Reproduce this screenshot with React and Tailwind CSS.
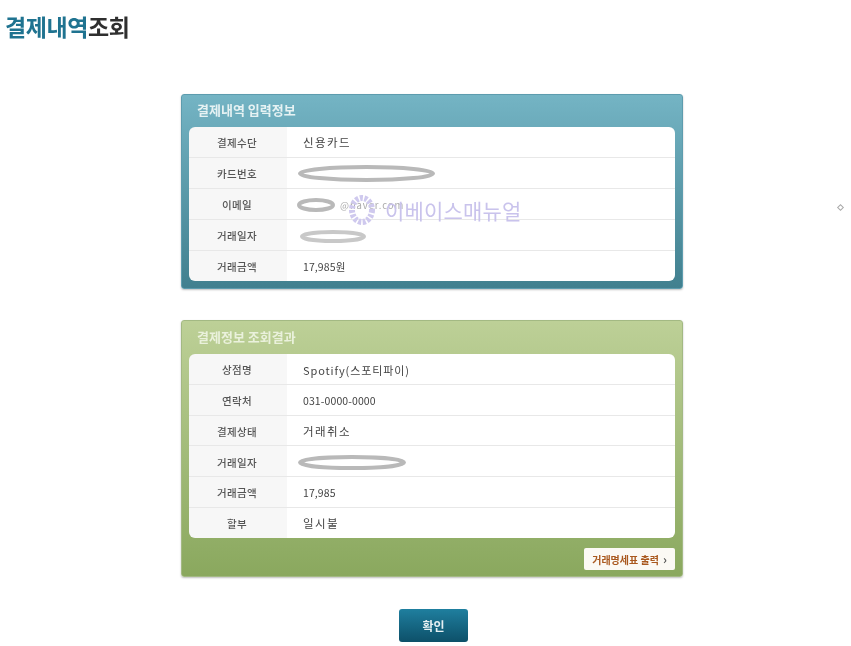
const font = "font-['Noto_Sans_CJK_KR','Noto_Sans',sans-serif]";

function Scribble({ width, height = 16, stroke = "#b9b9b9", sw = 4 }) {
  return (
    <svg width={width} height={height} viewBox={`0 0 ${width} ${height}`} className="block blur-[0.5px]">
      <ellipse cx={width / 2} cy={height / 2} rx={width / 2 - sw / 2} ry={height / 2 - sw / 2} fill="none" stroke={stroke} strokeWidth={sw} />
    </svg>
  );
}

function Row({ label, children, last }) {
  return (
    <div className={`flex flex-1 ${last ? "" : "border-b border-[#e8e8e8]"}`}>
      <div className="w-[98px] bg-[#f7f7f7] flex items-center justify-center pt-[2px] pr-[2px] text-[10.5px] tracking-[0.3px] font-medium text-[#555]">{label}</div>
      <div className="flex-1 bg-white flex items-center pl-[16px] pt-[2px] text-[#444]">{children}</div>
    </div>
  );
}

function Panel({ title, gradient, border, titleColor, headerH, innerH, footer, rows }) {
  return (
    <div className={`rounded-[3px] border ${border} ${gradient} px-[7px] shadow-[0_1px_2px_rgba(0,0,0,0.25)]`}>
      <div className={`${headerH} flex items-center pl-[8px] pb-[2px] text-[13px] font-bold ${titleColor}`}>{title}</div>
      <div className={`${innerH} rounded-[6px] overflow-hidden flex flex-col`}>
        {rows.map((r, i) => (
          <Row key={i} label={r.label} last={i === rows.length - 1}>{r.value}</Row>
        ))}
      </div>
      {footer}
    </div>
  );
}

const ko = (text) => <span className="text-[11.5px] tracking-[1.4px]">{text}</span>;
const num = (text) => <span className="text-[10.5px] tracking-[0.1px]">{text}</span>;

export default function App() {
  return (
    <div className={`relative w-[851px] h-[646px] overflow-hidden bg-white ${font} blur-[0.4px]`}>
      <h1 className="pl-[5px] pt-[9px] text-[23px] leading-[34px] font-bold tracking-[-0.4px]">
        <span className="text-[#1f7390]">결제내역</span>
        <span className="text-[#2f2f2f]">조회</span>
      </h1>

      <div className="w-[502px] ml-[181px] mt-[51px]">
        <Panel
          title="결제내역 입력정보"
          gradient="bg-gradient-to-b from-[#74b4c4] to-[#41808f]"
          border="border-[#5d9cae]"
          titleColor="text-[#e6f2f3]"
          headerH="h-[32px]"
          innerH="h-[154px]"
          rows={[
            { label: "결제수단", value: ko("신용카드") },
            { label: "카드번호", value: <span className="-ml-[5px] -mt-[2px]"><Scribble width={137} height={17} /></span> },
            {
              label: "이메일",
              value: (
                <span className="flex items-center -ml-[6px]">
                  <Scribble width={38} height={14} />
                  <span className="ml-[5px] text-[9.5px] tracking-[0.9px] text-[#aaa]">@naver.com</span>
                </span>
              ),
            },
            { label: "거래일자", value: <span className="-ml-[3px]"><Scribble width={66} height={13} stroke="#c8c8c8" /></span> },
            { label: "거래금액", value: num("17,985원") },
          ]}
          footer={<div className="h-[7px]" />}
        />

        <div className="mt-[31px]">
          <Panel
            title="결제정보 조회결과"
            gradient="bg-gradient-to-b from-[#bdd097] to-[#8aa85e]"
            border="border-[#a3b983]"
            titleColor="text-[#eaf1dc]"
            headerH="h-[33px]"
            innerH="h-[184px]"
            rows={[
              { label: "상점명", value: <span className="text-[11px] tracking-[0.9px]">Spotify(스포티파이)</span> },
              { label: "연락처", value: num("031-0000-0000") },
              { label: "결제상태", value: ko("거래취소") },
              { label: "거래일자", value: <span className="-ml-[5px]"><Scribble width={108} height={15} /></span> },
              { label: "거래금액", value: num("17,985") },
              { label: "할부", value: ko("일시불") },
            ]}
            footer={
              <div className="h-[38px] flex items-center justify-end pt-[4px]">
                <button className="h-[22px] w-[91px] bg-[#fbf9f4] rounded-[2px] flex items-center justify-center gap-[4px] text-[10px] font-bold text-[#a9581e]">
                  거래명세표 출력
                  <span className="text-[#555] text-[12px] leading-none">›</span>
                </button>
              </div>
            }
          />
        </div>

        <div className="flex justify-center mt-[32px] pl-[3px]">
          <button className="w-[69px] h-[33px] rounded-[3px] bg-gradient-to-b from-[#1f7f9f] to-[#0d5069] text-[#e6f0f3] text-[12px] font-bold">확인</button>
        </div>
      </div>

      {/* watermark */}
      <div className="absolute left-[348px] top-[193px] flex items-center gap-[9px] pointer-events-none">
        <svg width="28" height="34" viewBox="0 0 28 34">
          <ellipse cx="14" cy="17" rx="10" ry="12" fill="none" stroke="#cfc9ee" strokeWidth="6" strokeDasharray="3 1.5" />
        </svg>
        <span className="text-[21px] leading-none tracking-[0.2px] text-[#c9c3ec]">이베이스매뉴얼</span>
      </div>
      <div className="absolute left-[838px] top-[205px] size-[5px] rotate-45 border border-[#aaa]" />
    </div>
  );
}
